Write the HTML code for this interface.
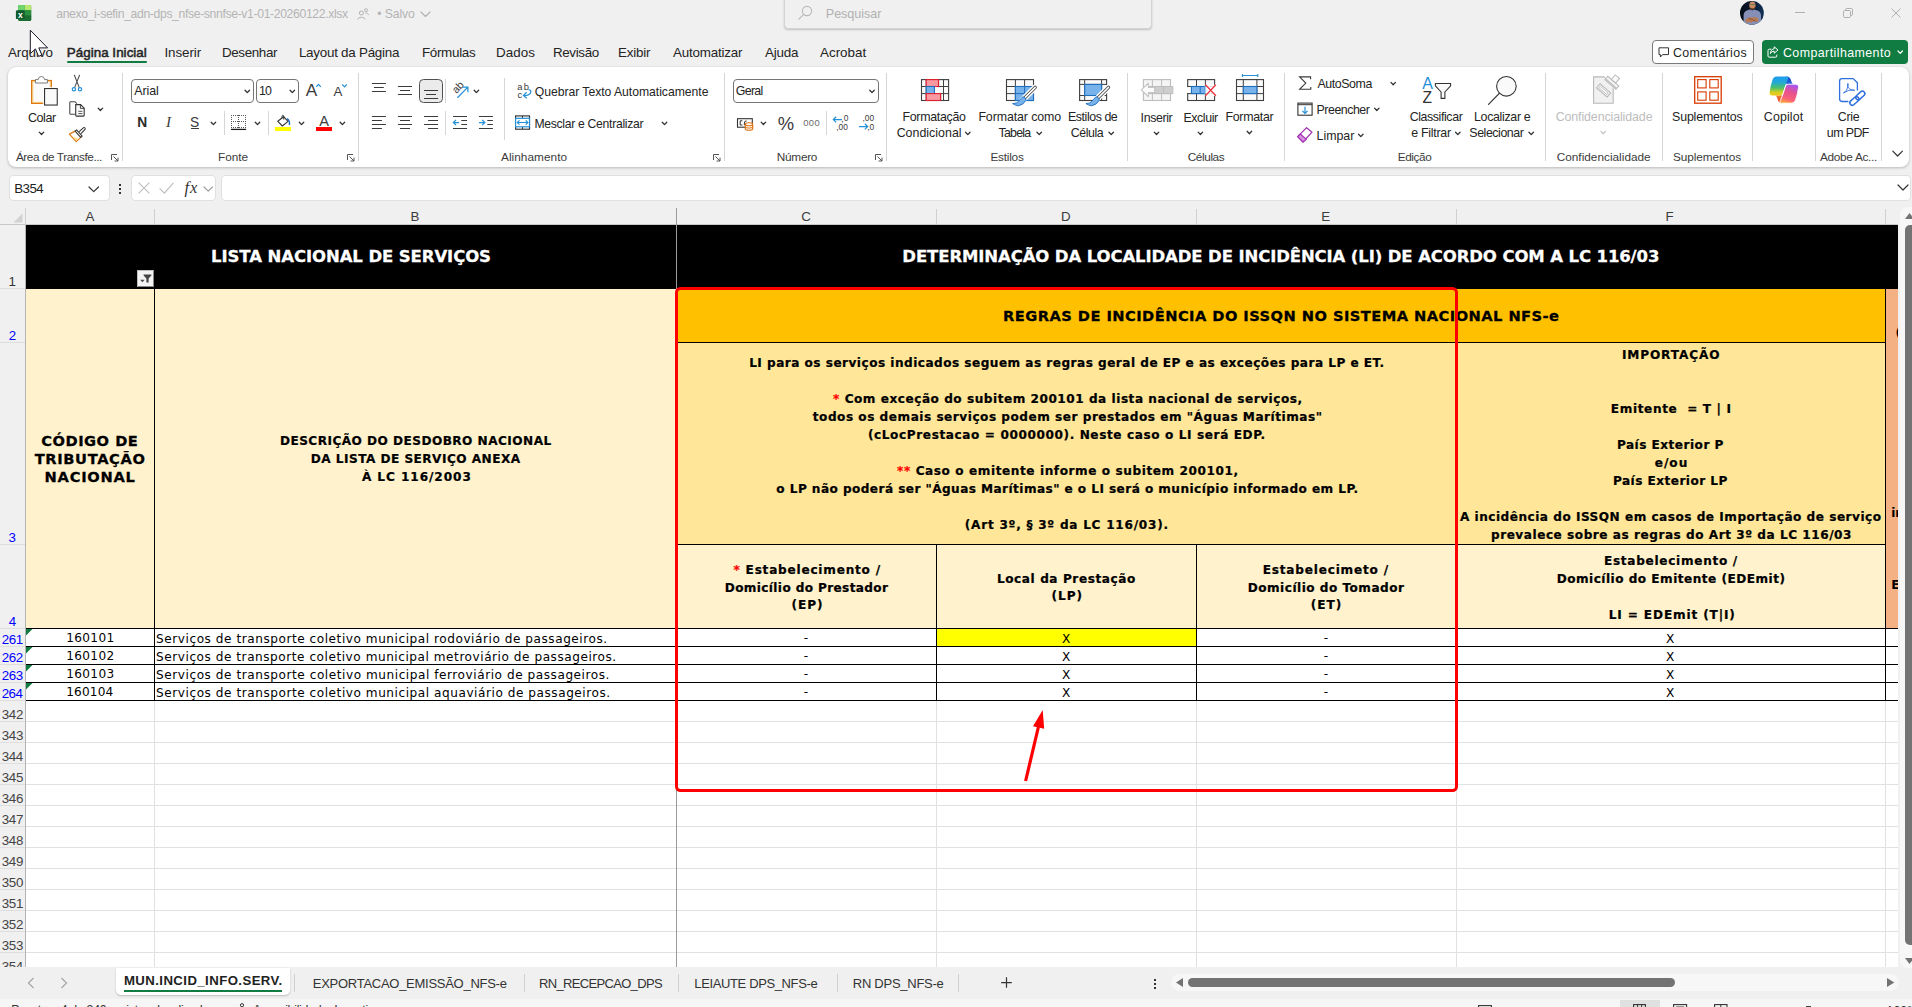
<!DOCTYPE html>
<html lang="pt-BR"><head><meta charset="utf-8"><title>anexo_i-sefin_adn-dps_nfse-snnfse-v1-01-20260122.xlsx - Excel</title>
<style>
html,body{margin:0;padding:0}
body{width:1912px;height:1007px;overflow:hidden;background:#f0f0f0;position:relative;font-family:'Liberation Sans',sans-serif}
.b{position:absolute;box-sizing:border-box}
.t{position:absolute;white-space:pre;margin:0;padding:0}
svg{overflow:visible}
</style></head><body>
<svg class="b" style="left:15px;top:4px;" width="18" height="18" viewBox="0 0 18 18">
<rect x="3.2" y="1" width="13" height="16" rx="1.4" fill="#1f7b38"/>
<path d="M3.2 2.4 Q3.2 1 4.6 1 H9.7 V6.2 H3.2 Z" fill="#6dd56b"/><path d="M9.7 1 H14.8 Q16.2 1 16.2 2.4 V6.2 H9.7 Z" fill="#b7e86e"/>
<rect x="9.7" y="6.2" width="6.5" height="5.4" fill="#2a8f3e"/>
<path d="M3.2 11.6 H16.2 V15.6 Q16.2 17 14.8 17 H4.6 Q3.2 17 3.2 15.6 Z" fill="#1b6e33"/>
<rect x="0.9" y="6.2" width="8.7" height="8.9" rx="1.2" fill="#0f5c2f"/>
</svg>
<span class="t" style="left:18.06px;top:10.52px;font-size:8.6px;line-height:8.6px;color:#fff;font-weight:700;">x</span>
<span class="t" style="left:56.24px;top:8.11px;font-size:12.2px;line-height:12.2px;color:#b4b4b4;letter-spacing:-0.354px;">anexo_i-sefin_adn-dps_nfse-snnfse-v1-01-20260122.xlsx</span>
<svg class="b" style="left:356.5px;top:7.5px;" width="12" height="12" viewBox="0 0 12 12"><circle cx="4.4" cy="5" r="2" fill="none" stroke="#b0b0b0" stroke-width="1"/><path d="M0.8 11.5 C1 8.6 7.8 8.6 8 11.5" fill="none" stroke="#b0b0b0" stroke-width="1"/><circle cx="9" cy="2.2" r="1.5" fill="none" stroke="#b0b0b0" stroke-width="0.9"/><path d="M8.2 5.2 C10 4.6 11.4 5.6 11.5 7" fill="none" stroke="#b0b0b0" stroke-width="0.9"/></svg>
<span class="t" style="left:377.37px;top:8.11px;font-size:12.2px;line-height:12.2px;color:#b4b4b4;letter-spacing:-0.134px;">• Salvo</span>
<svg class="b" style="left:420.5px;top:11.75px;" width="9" height="4.5" viewBox="0 0 9 4.5"><path d="M0 0 L4.5 4.5 L9 0" fill="none" stroke="#b0b0b0" stroke-width="1.1" stroke-linecap="round" stroke-linejoin="round"/></svg>
<div class="b" style="left:784px;top:-6px;width:368px;height:34.5px;background:#f0f0f0;border:1px solid #d4d4d4;border-radius:4px;box-shadow:0 1px 2px rgba(0,0,0,.2);"></div>
<svg class="b" style="left:798px;top:5px;" width="15" height="15" viewBox="0 0 15 15"><circle cx="9" cy="6" r="4.6" fill="none" stroke="#b8b8b8" stroke-width="1.1"/><path d="M5.7 9.3 L0.8 14.2" stroke="#b8b8b8" stroke-width="1.1" stroke-linecap="round"/></svg>
<span class="t" style="left:825.82px;top:8.08px;font-size:12.6px;line-height:12.6px;color:#b0b0b0;letter-spacing:-0.057px;">Pesquisar</span>
<svg class="b" style="left:1740.3px;top:1.1px;" width="23.8" height="23.8" viewBox="0 0 23.8 23.8"><defs><clipPath id="av"><circle cx="11.9" cy="11.9" r="11.9"/></clipPath>
<linearGradient id="avbg" x1="0" y1="0" x2="1" y2="0"><stop offset="0" stop-color="#070d18"/><stop offset="0.55" stop-color="#0a1830"/><stop offset="1" stop-color="#12355a"/></linearGradient></defs>
<g clip-path="url(#av)"><rect width="24" height="24" fill="url(#avbg)"/>
<path d="M3.6 24 V14 Q4 9.6 9 8.8 L12 8.2 L15 8.8 Q20.6 9.8 21 14 V24 Z" fill="#8690b6"/>
<path d="M10.6 8.6 L12.2 10.6 L13.8 8.6 L13 7.6 H11.4 Z" fill="#4a7ab8"/>
<ellipse cx="12.4" cy="4.6" rx="3.1" ry="4" fill="#c98a62"/>
<path d="M9.5 5.8 Q9.8 9 12.4 9.2 Q15 9 15.3 5.8 Q14.2 7.4 12.4 7.4 Q10.6 7.4 9.5 5.8 Z" fill="#4a2e20"/>
<rect x="9.6" y="3" width="5.6" height="0.9" fill="#6a7a58"/>
<path d="M5.4 19 Q8 15.4 12 16.4 Q15.6 15.2 18.4 17.8 L17.8 21 Q14 19.4 11.6 21.4 Q8.4 20.4 5.8 21.6 Z" fill="#b87a52"/>
<path d="M8.4 17.4 Q12 18 16 20.4" stroke="#7a4a30" stroke-width="0.7" fill="none"/>
</g></svg>
<div class="b" style="left:1795px;top:12px;width:10px;height:1px;background:#b0b0b0;"></div>
<svg class="b" style="left:1843px;top:8px;" width="10" height="10" viewBox="0 0 10 10"><rect x="0.5" y="2.5" width="7" height="7" rx="1.2" fill="none" stroke="#b0b0b0"/><path d="M2.5 2.5 V1.7 Q2.5 0.5 3.7 0.5 H8.3 Q9.5 0.5 9.5 1.7 V6.3 Q9.5 7.5 8.3 7.5 H7.5" fill="none" stroke="#b0b0b0"/></svg>
<svg class="b" style="left:1891px;top:8px;" width="10" height="10" viewBox="0 0 10 10"><path d="M0.5 0.5 L9.5 9.5 M9.5 0.5 L0.5 9.5" stroke="#b0b0b0" stroke-width="1" fill="none"/></svg>
<span class="t" style="left:8.04px;top:46.22px;font-size:13.4px;line-height:13.4px;color:#242424;letter-spacing:-0.099px;">Arquivo</span>
<span class="t" style="left:66.70px;top:46.22px;font-size:13.4px;line-height:13.4px;color:#242424;letter-spacing:0.038px;-webkit-text-stroke-width:0.5px;">Página Inicial</span>
<span class="t" style="left:164.46px;top:46.22px;font-size:13.4px;line-height:13.4px;color:#242424;letter-spacing:-0.088px;">Inserir</span>
<span class="t" style="left:221.92px;top:46.22px;font-size:13.4px;line-height:13.4px;color:#242424;letter-spacing:-0.361px;">Desenhar</span>
<span class="t" style="left:298.92px;top:46.22px;font-size:13.4px;line-height:13.4px;color:#242424;letter-spacing:-0.249px;">Layout da Página</span>
<span class="t" style="left:421.92px;top:46.22px;font-size:13.4px;line-height:13.4px;color:#242424;letter-spacing:-0.290px;">Fórmulas</span>
<span class="t" style="left:495.92px;top:46.22px;font-size:13.4px;line-height:13.4px;color:#242424;letter-spacing:0.080px;">Dados</span>
<span class="t" style="left:552.92px;top:46.22px;font-size:13.4px;line-height:13.4px;color:#242424;letter-spacing:-0.338px;">Revisão</span>
<span class="t" style="left:617.92px;top:46.22px;font-size:13.4px;line-height:13.4px;color:#242424;letter-spacing:-0.188px;">Exibir</span>
<span class="t" style="left:673.04px;top:46.22px;font-size:13.4px;line-height:13.4px;color:#242424;letter-spacing:-0.213px;">Automatizar</span>
<span class="t" style="left:764.92px;top:46.22px;font-size:13.4px;line-height:13.4px;color:#242424;letter-spacing:-0.204px;">Ajuda</span>
<span class="t" style="left:820.04px;top:46.22px;font-size:13.4px;line-height:13.4px;color:#242424;">Acrobat</span>
<div class="b" style="left:67px;top:61px;width:80px;height:2.4px;background:#107c41;border-radius:1px;"></div>
<div class="b" style="left:1652.3px;top:40.2px;width:101.6px;height:23.6px;background:#fff;border:1px solid #7a7a7a;border-radius:4px;"></div>
<svg class="b" style="left:1657.5px;top:46.7px;" width="12" height="12" viewBox="0 0 12 12"><path d="M1 0.8 H10.5 V7.6 H4.6 L2.4 10 V7.6 H1 Z" fill="none" stroke="#333" stroke-width="1" stroke-linejoin="round"/></svg>
<span class="t" style="left:1672.98px;top:46.79px;font-size:12.4px;line-height:12.4px;color:#242424;letter-spacing:0.341px;">Comentários</span>
<div class="b" style="left:1762px;top:40.2px;width:146.2px;height:23.6px;background:#107c41;border-radius:4px;"></div>
<svg class="b" style="left:1766.5px;top:45.5px;" width="12" height="12" viewBox="0 0 12 12"><path d="M4.5 3.2 H2.2 Q1 3.2 1 4.4 V10 Q1 11.2 2.2 11.2 H8.6 Q9.8 11.2 9.8 10 V8.6" fill="none" stroke="#fff" stroke-width="1"/><path d="M7.2 0.8 L11 4 L7.2 7.2 V5.2 C5.4 5.2 4.2 6 3.4 7.6 C3.6 4.8 5 3 7.2 2.8 Z" fill="none" stroke="#fff" stroke-width="1" stroke-linejoin="round"/></svg>
<span class="t" style="left:1782.98px;top:46.79px;font-size:12.4px;line-height:12.4px;color:#fff;letter-spacing:0.433px;">Compartilhamento</span>
<svg class="b" style="left:1898.35px;top:51.199999999999996px;" width="4.5" height="2.4" viewBox="0 0 4.5 2.4"><path d="M0 0 L2.25 2.4 L4.5 0" fill="none" stroke="#fff" stroke-width="1.3" stroke-linecap="round" stroke-linejoin="round"/></svg>
<svg class="b" style="left:0px;top:0px;z-index:50;" width="60" height="60" viewBox="0 0 60 60"><path d="M30.3 30.2 V53.6 L35.4 48.9 L38.6 56.4 L41.8 55 L38.8 47.9 H47.6 Z" fill="#fff" stroke="#1a1a2a" stroke-width="1" stroke-linejoin="miter"/></svg>
<div class="b" style="left:8px;top:67px;width:1901px;height:99.7px;background:#fff;border-radius:8px;box-shadow:0 1px 3px rgba(0,0,0,.22),0 0 1px rgba(0,0,0,.15);"></div>
<div class="b" style="left:121.8px;top:72.5px;width:1px;height:88.5px;background:#d6d6d6;"></div>
<div class="b" style="left:358.0px;top:72.5px;width:1px;height:88.5px;background:#d6d6d6;"></div>
<div class="b" style="left:723.5px;top:72.5px;width:1px;height:88.5px;background:#d6d6d6;"></div>
<div class="b" style="left:885.7px;top:72.5px;width:1px;height:88.5px;background:#d6d6d6;"></div>
<div class="b" style="left:1127.0px;top:72.5px;width:1px;height:88.5px;background:#d6d6d6;"></div>
<div class="b" style="left:1283.9px;top:72.5px;width:1px;height:88.5px;background:#d6d6d6;"></div>
<div class="b" style="left:1545.0px;top:72.5px;width:1px;height:88.5px;background:#d6d6d6;"></div>
<div class="b" style="left:1661.9px;top:72.5px;width:1px;height:88.5px;background:#d6d6d6;"></div>
<div class="b" style="left:1752.0px;top:72.5px;width:1px;height:88.5px;background:#d6d6d6;"></div>
<div class="b" style="left:1814.8px;top:72.5px;width:1px;height:88.5px;background:#d6d6d6;"></div>
<div class="b" style="left:1880.8px;top:72.5px;width:1px;height:88.5px;background:#d6d6d6;"></div>
<span class="t" style="left:15.95px;top:152.32px;font-size:11.8px;line-height:11.8px;color:#3b3b3b;letter-spacing:-0.433px;">Área de Transfe...</span>
<svg class="b" style="left:111px;top:153.5px;" width="8" height="8" viewBox="0 0 8 8"><path d="M0.5 6 V0.5 H6" fill="none" stroke="#555" stroke-width="1"/><path d="M2.5 2.5 L7 7 M7 3.6 V7 H3.6" fill="none" stroke="#555" stroke-width="1"/></svg>
<span class="t" style="left:218.03px;top:152.32px;font-size:11.8px;line-height:11.8px;color:#3b3b3b;letter-spacing:-0.013px;">Fonte</span>
<svg class="b" style="left:347px;top:153.5px;" width="8" height="8" viewBox="0 0 8 8"><path d="M0.5 6 V0.5 H6" fill="none" stroke="#555" stroke-width="1"/><path d="M2.5 2.5 L7 7 M7 3.6 V7 H3.6" fill="none" stroke="#555" stroke-width="1"/></svg>
<span class="t" style="left:501.03px;top:152.32px;font-size:11.8px;line-height:11.8px;color:#3b3b3b;letter-spacing:0.045px;">Alinhamento</span>
<svg class="b" style="left:712.7px;top:153.5px;" width="8" height="8" viewBox="0 0 8 8"><path d="M0.5 6 V0.5 H6" fill="none" stroke="#555" stroke-width="1"/><path d="M2.5 2.5 L7 7 M7 3.6 V7 H3.6" fill="none" stroke="#555" stroke-width="1"/></svg>
<span class="t" style="left:776.74px;top:152.32px;font-size:11.8px;line-height:11.8px;color:#3b3b3b;letter-spacing:-0.252px;">Número</span>
<svg class="b" style="left:875px;top:153.5px;" width="8" height="8" viewBox="0 0 8 8"><path d="M0.5 6 V0.5 H6" fill="none" stroke="#555" stroke-width="1"/><path d="M2.5 2.5 L7 7 M7 3.6 V7 H3.6" fill="none" stroke="#555" stroke-width="1"/></svg>
<span class="t" style="left:990.48px;top:152.32px;font-size:11.8px;line-height:11.8px;color:#3b3b3b;letter-spacing:-0.231px;">Estilos</span>
<span class="t" style="left:1187.67px;top:152.32px;font-size:11.8px;line-height:11.8px;color:#3b3b3b;letter-spacing:-0.383px;">Células</span>
<span class="t" style="left:1397.74px;top:152.32px;font-size:11.8px;line-height:11.8px;color:#3b3b3b;letter-spacing:-0.417px;">Edição</span>
<span class="t" style="left:1556.67px;top:152.32px;font-size:11.8px;line-height:11.8px;color:#3b3b3b;letter-spacing:0.015px;">Confidencialidade</span>
<span class="t" style="left:1673.06px;top:152.32px;font-size:11.8px;line-height:11.8px;color:#3b3b3b;letter-spacing:-0.088px;">Suplementos</span>
<span class="t" style="left:1820.03px;top:152.32px;font-size:11.8px;line-height:11.8px;color:#3b3b3b;letter-spacing:-0.307px;">Adobe Ac...</span>
<span class="t" style="left:27.90px;top:112.28px;font-size:12.6px;line-height:12.6px;color:#242424;letter-spacing:-0.462px;">Colar</span>
<div class="b" style="left:131px;top:79px;width:122.5px;height:23.8px;background:#fff;border:1px solid #757575;border-radius:4px;"></div>
<span class="t" style="left:134.15px;top:85.19px;font-size:12.4px;line-height:12.4px;color:#242424;letter-spacing:-0.026px;">Arial</span>
<div class="b" style="left:256.2px;top:79px;width:42.6px;height:23.8px;background:#fff;border:1px solid #757575;border-radius:4px;"></div>
<span class="t" style="left:259.11px;top:85.19px;font-size:12.4px;line-height:12.4px;color:#242424;letter-spacing:-1.000px;">10</span>
<span class="t" style="left:305.75px;top:81.87px;font-size:17.2px;line-height:17.2px;color:#3b3b3b;letter-spacing:0.563px;">A</span>
<span class="t" style="left:333.47px;top:85.02px;font-size:13.3px;line-height:13.3px;color:#3b3b3b;letter-spacing:0.723px;">A</span>
<span class="t" style="left:137.36px;top:116.07px;font-size:13.8px;line-height:13.8px;color:#2b2b2b;font-weight:700;letter-spacing:0.159px;">N</span>
<span class="t" style="left:166.11px;top:115.05px;font-size:15px;line-height:15px;color:#3b3b3b;font-family:'Liberation Serif',serif;font-style:italic;letter-spacing:1.000px;">I</span>
<span class="t" style="left:189.89px;top:116.19px;font-size:13.8px;line-height:13.8px;color:#3b3b3b;letter-spacing:-1.000px;">S</span>
<div class="b" style="left:191px;top:128px;width:7.8px;height:1px;background:#3b3b3b;"></div>
<div class="b" style="left:224px;top:111.3px;width:1px;height:23.39999999999999px;background:#d6d6d6;"></div>
<div class="b" style="left:268px;top:111.3px;width:1px;height:23.39999999999999px;background:#d6d6d6;"></div>
<div class="b" style="left:275px;top:126.9px;width:16.1px;height:4.1px;background:#ffff00;"></div>
<span class="t" style="left:319.19px;top:113.96px;font-size:14.6px;line-height:14.6px;color:#3b3b3b;letter-spacing:0.442px;">A</span>
<div class="b" style="left:315.9px;top:126.9px;width:16.1px;height:4.1px;background:#ff0000;"></div>
<div class="b" style="left:419px;top:79px;width:24px;height:24px;background:#ebebeb;border:1px solid #505050;border-radius:4.5px;"></div>
<div class="b" style="left:445px;top:79.1px;width:1px;height:23.900000000000006px;background:#d6d6d6;"></div>
<div class="b" style="left:504px;top:78px;width:1px;height:62px;background:#d6d6d6;"></div>
<span class="t" style="left:534.70px;top:86.01px;font-size:12.2px;line-height:12.2px;color:#242424;letter-spacing:-0.029px;">Quebrar Texto Automaticamente</span>
<div class="b" style="left:445px;top:111.3px;width:1px;height:23.39999999999999px;background:#d6d6d6;"></div>
<span class="t" style="left:534.43px;top:117.91px;font-size:12.2px;line-height:12.2px;color:#242424;letter-spacing:-0.301px;">Mesclar e Centralizar</span>
<div class="b" style="left:733px;top:79px;width:146px;height:23.8px;background:#fff;border:1px solid #757575;border-radius:4px;"></div>
<span class="t" style="left:735.65px;top:85.19px;font-size:12.4px;line-height:12.4px;color:#242424;letter-spacing:-0.641px;">Geral</span>
<span class="t" style="left:777.79px;top:114.80px;font-size:18.4px;line-height:18.4px;color:#3b3b3b;letter-spacing:-0.455px;">%</span>
<span class="t" style="left:803.18px;top:118.03px;font-size:9.4px;line-height:9.4px;color:#6a6a6a;letter-spacing:0.392px;">000</span>
<div class="b" style="left:826px;top:111.1px;width:1px;height:23.599999999999994px;background:#d6d6d6;"></div>
<span class="t" style="left:902.44px;top:111.19px;font-size:12.4px;line-height:12.4px;color:#242424;letter-spacing:-0.283px;">Formatação</span>
<span class="t" style="left:896.65px;top:127.19px;font-size:12.4px;line-height:12.4px;color:#242424;letter-spacing:0.021px;">Condicional</span>
<span class="t" style="left:978.40px;top:111.19px;font-size:12.4px;line-height:12.4px;color:#242424;letter-spacing:-0.103px;">Formatar como</span>
<span class="t" style="left:998.50px;top:127.19px;font-size:12.4px;line-height:12.4px;color:#242424;letter-spacing:-0.772px;">Tabela</span>
<span class="t" style="left:1068.01px;top:111.19px;font-size:12.4px;line-height:12.4px;color:#242424;letter-spacing:-0.445px;">Estilos de</span>
<span class="t" style="left:1070.65px;top:127.19px;font-size:12.4px;line-height:12.4px;color:#242424;letter-spacing:-0.420px;">Célula</span>
<span class="t" style="left:1140.59px;top:111.99px;font-size:12.4px;line-height:12.4px;color:#242424;letter-spacing:-0.376px;">Inserir</span>
<span class="t" style="left:1183.40px;top:111.99px;font-size:12.4px;line-height:12.4px;color:#242424;letter-spacing:-0.398px;">Excluir</span>
<span class="t" style="left:1225.40px;top:110.89px;font-size:12.4px;line-height:12.4px;color:#242424;letter-spacing:-0.276px;">Formatar</span>
<span class="t" style="left:1317.38px;top:77.99px;font-size:12.4px;line-height:12.4px;color:#242424;letter-spacing:-0.419px;">AutoSoma</span>
<span class="t" style="left:1316.59px;top:103.89px;font-size:12.4px;line-height:12.4px;color:#242424;letter-spacing:-0.489px;">Preencher</span>
<span class="t" style="left:1316.59px;top:129.89px;font-size:12.4px;line-height:12.4px;color:#242424;letter-spacing:-0.018px;">Limpar</span>
<span class="t" style="left:1409.65px;top:111.19px;font-size:12.4px;line-height:12.4px;color:#242424;letter-spacing:-0.400px;">Classificar</span>
<span class="t" style="left:1411.34px;top:127.19px;font-size:12.4px;line-height:12.4px;color:#242424;letter-spacing:-0.288px;">e Filtrar</span>
<span class="t" style="left:1474.01px;top:111.19px;font-size:12.4px;line-height:12.4px;color:#242424;letter-spacing:-0.322px;">Localizar e</span>
<span class="t" style="left:1469.32px;top:127.19px;font-size:12.4px;line-height:12.4px;color:#242424;letter-spacing:-0.447px;">Selecionar</span>
<span class="t" style="left:1555.65px;top:111.19px;font-size:12.4px;line-height:12.4px;color:#bdbdbd;letter-spacing:-0.101px;">Confidencialidade</span>
<span class="t" style="left:1672.08px;top:111.19px;font-size:12.4px;line-height:12.4px;color:#242424;letter-spacing:-0.176px;">Suplementos</span>
<span class="t" style="left:1763.85px;top:111.19px;font-size:12.4px;line-height:12.4px;color:#242424;letter-spacing:0.123px;">Copilot</span>
<span class="t" style="left:1837.85px;top:111.19px;font-size:12.4px;line-height:12.4px;color:#242424;letter-spacing:-0.325px;">Crie</span>
<span class="t" style="left:1826.83px;top:126.89px;font-size:12.4px;line-height:12.4px;color:#242424;letter-spacing:-0.585px;">um PDF</span>
<svg class="b" style="left:0;top:0" width="1912" height="200" viewBox="0 0 1912 200"><path d="M1892.80 151.20 L1897.60 156.00 L1902.40 151.20" fill="none" stroke="#333" stroke-width="1.2" stroke-linecap="round" stroke-linejoin="round"/><rect x="31.65" y="80.55" width="19.7" height="22.8" fill="#fde6b4" stroke="#e07a10" stroke-width="1.3"/><rect x="33.6" y="82.4" width="15.9" height="19.2" fill="#fafafa"/><path d="M35.4 83 V79.6 H38.2 Q38.6 76.5 41.4 76.5 Q44.2 76.5 44.6 79.6 H47.4 V83 Z" fill="#fff" stroke="#7a7a7a" stroke-width="1"/><rect x="43.2" y="87.2" width="15.4" height="19" fill="#fff"/><rect x="44.55" y="88.55" width="12.7" height="16.5" fill="#fafafa" stroke="#333" stroke-width="1.1"/><path d="M39.25 132.10 L41.50 134.50 L43.75 132.10" fill="none" stroke="#333" stroke-width="1.3" stroke-linecap="round" stroke-linejoin="round"/><path d="M74.4 75.2 L79.3 87.6 M79.5 75.2 L74.6 87.6" stroke="#4a4a4a" stroke-width="1.05" fill="none" stroke-linecap="round"/><circle cx="73.9" cy="89.2" r="1.65" fill="#fff" stroke="#2490d8" stroke-width="1.2"/><circle cx="80" cy="89.2" r="1.65" fill="#fff" stroke="#2490d8" stroke-width="1.2"/><path d="M74.9 114.2 H70.6 Q69.8 114.2 69.8 113.4 V102.5 Q69.8 101.7 70.6 101.7 H74.9 L77 103.6" fill="none" stroke="#444" stroke-width="1.05"/><path d="M75.7 104.6 H80.6 L84.2 108.2 V115.3 Q84.2 116.1 83.4 116.1 H76.5 Q75.7 116.1 75.7 115.3 Z" fill="#fafafa" stroke="#333" stroke-width="1.1"/><path d="M80.4 104.8 V108.4 H84" fill="none" stroke="#333" stroke-width="0.9"/><path d="M78.3 111.3 H82.4 M78.3 113.6 H82.4" stroke="#444" stroke-width="0.9"/><path d="M98.15 108.10 L100.40 110.50 L102.65 108.10" fill="none" stroke="#333" stroke-width="1.3" stroke-linecap="round" stroke-linejoin="round"/><path d="M69.4 134.1 L75.6 130.9 L81.1 137.1 L76.2 141.6 Z" fill="#fff" stroke="#e07a10" stroke-width="1.2" stroke-linejoin="round"/><path d="M72.2 136.4 L78 138.2 L76.2 140.4 Z" fill="#fde08a"/><path d="M79.2 131.6 L83.3 127.9 Q84.3 127.2 85 128 Q85.6 128.9 84.8 129.7 L81 133.6" fill="#fff" stroke="#333" stroke-width="1.05"/><path d="M76.6 129.9 L82.2 136.1 L80.7 137.4 L75.1 131.2 Z" fill="#fff" stroke="#333" stroke-width="1.05" stroke-linejoin="round"/><path d="M245.05 90.20 L247.30 92.60 L249.55 90.20" fill="none" stroke="#333" stroke-width="1.3" stroke-linecap="round" stroke-linejoin="round"/><path d="M290.05 90.20 L292.30 92.60 L294.55 90.20" fill="none" stroke="#333" stroke-width="1.3" stroke-linecap="round" stroke-linejoin="round"/><path d="M316.2 86.9 L318.5 84.4 L320.8 86.9" fill="none" stroke="#2490d8" stroke-width="1.25"/><path d="M342.2 84.4 L344.5 86.9 L346.8 84.4" fill="none" stroke="#2490d8" stroke-width="1.25"/><path d="M211.15 122.20 L213.40 124.60 L215.65 122.20" fill="none" stroke="#333" stroke-width="1.3" stroke-linecap="round" stroke-linejoin="round"/><g stroke="#555" stroke-width="1" stroke-dasharray="1 1" fill="none"><path d="M231 115.5 H246 M231 121.5 H246 M231 127.5 H246 M231.5 115 V128 M238.5 115 V128 M245.5 115 V128"/></g><path d="M231 129.4 H246.1" stroke="#1a1a1a" stroke-width="1.3"/><path d="M255.25 122.20 L257.50 124.60 L259.75 122.20" fill="none" stroke="#333" stroke-width="1.3" stroke-linecap="round" stroke-linejoin="round"/><path d="M283.6 116.7 L288 121.3 L282.4 126 L277.8 121.3 Z" fill="#fff" stroke="#333" stroke-width="1.1" stroke-linejoin="round"/><path d="M283.8 119.6 V116.6 Q283.8 115.4 282.9 115.4 Q282 115.4 282 116.6 V118.3" fill="none" stroke="#333" stroke-width="1"/><path d="M286.9 118.6 Q290.3 120.6 289.3 125" fill="none" stroke="#1e6fc0" stroke-width="1.5"/><path d="M299.25 122.20 L301.50 124.60 L303.75 122.20" fill="none" stroke="#333" stroke-width="1.3" stroke-linecap="round" stroke-linejoin="round"/><path d="M340.15 122.20 L342.40 124.60 L344.65 122.20" fill="none" stroke="#333" stroke-width="1.3" stroke-linecap="round" stroke-linejoin="round"/><path d="M371.9 83.5 H386" stroke="#3b3b3b" stroke-width="1.05"/><path d="M373.9 87.5 H383.8" stroke="#3b3b3b" stroke-width="1.05"/><path d="M371.9 91.5 H386" stroke="#3b3b3b" stroke-width="1.05"/><path d="M397.9 86.5 H412" stroke="#3b3b3b" stroke-width="1.05"/><path d="M400 90.5 H410" stroke="#3b3b3b" stroke-width="1.05"/><path d="M397.9 94.5 H412" stroke="#3b3b3b" stroke-width="1.05"/><path d="M424 90.5 H438.1" stroke="#3b3b3b" stroke-width="1.05"/><path d="M426 94.5 H436" stroke="#3b3b3b" stroke-width="1.05"/><path d="M424 98.5 H438.1" stroke="#3b3b3b" stroke-width="1.05"/><text x="0" y="0" font-family="Liberation Sans, sans-serif" font-size="10.6" fill="#3b3b3b" transform="translate(456.4 94) rotate(-47)">ab</text><path d="M457.4 97.7 L467.6 87.4 M462.8 87.1 H467.9 V92.2" fill="none" stroke="#2490d8" stroke-width="1.25"/><path d="M474.15 90.20 L476.40 92.60 L478.65 90.20" fill="none" stroke="#333" stroke-width="1.3" stroke-linecap="round" stroke-linejoin="round"/><text x="517.2" y="90.1" font-family="Liberation Sans, sans-serif" font-size="9.4" fill="#3b3b3b" textLength="11.8">ab</text><text x="517.4" y="97.5" font-family="Liberation Sans, sans-serif" font-size="9.4" fill="#3b3b3b">c</text><path d="M528.6 89.6 Q531.6 90 530.6 92.8 Q529.6 95.6 524 95.5 M526.6 92.2 L523.5 95.4 L526.8 98.4" fill="none" stroke="#2490d8" stroke-width="1.25"/><path d="M371.9 116.5 H386" stroke="#3b3b3b" stroke-width="1.05"/><path d="M371.9 120.5 H381.9" stroke="#3b3b3b" stroke-width="1.05"/><path d="M371.9 124.5 H386" stroke="#3b3b3b" stroke-width="1.05"/><path d="M371.9 128.5 H381.9" stroke="#3b3b3b" stroke-width="1.05"/><path d="M397.9 116.5 H412" stroke="#3b3b3b" stroke-width="1.05"/><path d="M400 120.5 H410" stroke="#3b3b3b" stroke-width="1.05"/><path d="M397.9 124.5 H412" stroke="#3b3b3b" stroke-width="1.05"/><path d="M400 128.5 H410" stroke="#3b3b3b" stroke-width="1.05"/><path d="M424 116.5 H438.1" stroke="#3b3b3b" stroke-width="1.05"/><path d="M428.1 120.5 H438.1" stroke="#3b3b3b" stroke-width="1.05"/><path d="M424 124.5 H438.1" stroke="#3b3b3b" stroke-width="1.05"/><path d="M428.1 128.5 H438.1" stroke="#3b3b3b" stroke-width="1.05"/><path d="M453 116.5 H467" stroke="#3b3b3b" stroke-width="1.05"/><path d="M461.3 120.5 H467" stroke="#3b3b3b" stroke-width="1.05"/><path d="M461.3 124.5 H467" stroke="#3b3b3b" stroke-width="1.05"/><path d="M453 128.5 H467" stroke="#3b3b3b" stroke-width="1.05"/><path d="M459 122.5 H453.6 M456 119.9 L453.4 122.5 L456 125.1" fill="none" stroke="#2490d8" stroke-width="1.25"/><path d="M478.9 116.5 H492.9" stroke="#3b3b3b" stroke-width="1.05"/><path d="M487.3 120.5 H492.9" stroke="#3b3b3b" stroke-width="1.05"/><path d="M487.3 124.5 H492.9" stroke="#3b3b3b" stroke-width="1.05"/><path d="M478.9 128.5 H492.9" stroke="#3b3b3b" stroke-width="1.05"/><path d="M479 122.5 H484.6 M482.2 119.9 L484.8 122.5 L482.2 125.1" fill="none" stroke="#2490d8" stroke-width="1.25"/><rect x="515.6" y="115.9" width="13.9" height="13.3" fill="#fff" stroke="#333" stroke-width="1.15"/><path d="M522.5 116 V129.2" stroke="#333" stroke-width="1.05"/><rect x="515.6" y="118.3" width="13.9" height="8.5" fill="#fff" stroke="#2490d8" stroke-width="1.2"/><path d="M517.4 122.5 H527.8 M519.5 120.3 L517.3 122.5 L519.5 124.7 M525.7 120.3 L527.9 122.5 L525.7 124.7" fill="none" stroke="#2490d8" stroke-width="1.2"/><path d="M662.25 122.20 L664.50 124.60 L666.75 122.20" fill="none" stroke="#333" stroke-width="1.3" stroke-linecap="round" stroke-linejoin="round"/><path d="M869.75 90.20 L872.00 92.60 L874.25 90.20" fill="none" stroke="#333" stroke-width="1.3" stroke-linecap="round" stroke-linejoin="round"/><rect x="737.5" y="118.7" width="14.8" height="8.5" fill="#fff" stroke="#333" stroke-width="1.1"/><path d="M742.4 120.8 H740.2 V125 H742.4 M746.6 121 Q744.4 120.6 744.4 123 V125.2" fill="none" stroke="#333" stroke-width="1"/><path d="M745.3 124.4 V128.8 Q745.3 130.3 749 130.3 Q752.7 130.3 752.7 128.8 V124.4" fill="#fff" stroke="#e0700a" stroke-width="1.1"/><ellipse cx="749" cy="124.2" rx="3.7" ry="1.5" fill="#fff" stroke="#e0700a" stroke-width="1.1"/><path d="M745.3 126.6 Q745.3 128.1 749 128.1 Q752.7 128.1 752.7 126.6" fill="none" stroke="#e0700a" stroke-width="1"/><path d="M761.15 122.10 L763.40 124.50 L765.65 122.10" fill="none" stroke="#333" stroke-width="1.3" stroke-linecap="round" stroke-linejoin="round"/><text x="843.7" y="121.4" font-family="Liberation Sans, sans-serif" font-size="8.4" fill="#3b3b3b">0</text><text x="836.2" y="130" font-family="Liberation Sans, sans-serif" font-size="8.4" fill="#3b3b3b" textLength="11.8">,00</text><text x="841.2" y="121.6" font-family="Liberation Sans, sans-serif" font-size="8.4" fill="#3b3b3b">,</text><path d="M842 119.6 H833.4 M836.2 116.8 L833.3 119.6 L836.2 122.4" fill="none" stroke="#2490d8" stroke-width="1.2"/><text x="862.4" y="121.4" font-family="Liberation Sans, sans-serif" font-size="8.4" fill="#3b3b3b" textLength="11.8">,00</text><text x="867.2" y="130" font-family="Liberation Sans, sans-serif" font-size="8.4" fill="#3b3b3b" textLength="7">,0</text><path d="M859 126.6 H867.6 M864.8 123.8 L867.7 126.6 L864.8 129.4" fill="none" stroke="#2490d8" stroke-width="1.2"/><rect x="921.5" y="79.6" width="27.10" height="20.90" fill="#fafafa" stroke="#3f3f3f" stroke-width="1.1"/><path d="M926.2 79.6 V100.5" stroke="#3f3f3f" stroke-width="1"/><path d="M943.5 79.6 V100.5" stroke="#3f3f3f" stroke-width="1"/><path d="M921.5 86.5 H948.6" stroke="#3f3f3f" stroke-width="1"/><path d="M921.5 93.6 H948.6" stroke="#3f3f3f" stroke-width="1"/><path d="M938.6 79.6 V86.5 M940.6 93.6 V100.5" stroke="#3f3f3f" stroke-width="1"/><rect x="926.2" y="79.6" width="12.3" height="6.9" fill="#f99aa3" stroke="#e0202c" stroke-width="1.1"/><rect x="926.2" y="86.5" width="8.2" height="7.1" fill="#78b2ea" stroke="#1e6fc0" stroke-width="1.1"/><rect x="926.2" y="93.6" width="14.4" height="6.9" fill="#f99aa3" stroke="#e0202c" stroke-width="1.1"/><path d="M965.55 132.20 L967.80 134.60 L970.05 132.20" fill="none" stroke="#333" stroke-width="1.3" stroke-linecap="round" stroke-linejoin="round"/><rect x="1006.5" y="79.6" width="27.00" height="20.90" fill="#fafafa" stroke="#3f3f3f" stroke-width="1.1"/><path d="M1015.4 79.6 V100.5" stroke="#3f3f3f" stroke-width="1"/><path d="M1024.6 79.6 V100.5" stroke="#3f3f3f" stroke-width="1"/><path d="M1006.5 86.5 H1033.5" stroke="#3f3f3f" stroke-width="1"/><path d="M1006.5 93.6 H1033.5" stroke="#3f3f3f" stroke-width="1"/><rect x="1015.4" y="86.5" width="18.1" height="14" fill="#78b2ea" stroke="#1e6fc0" stroke-width="1.1"/><path d="M1024.6 86.5 V100.5 M1015.4 93.6 H1033.5" stroke="#1e6fc0" stroke-width="1"/><path d="M1035.2 87.4 L1022.2 100.4" stroke="#fff" stroke-width="6" stroke-linecap="round"/><path d="M1035.2 87.4 L1024.2 98.4" stroke="#4a4a4a" stroke-width="3.4" stroke-linecap="round"/><path d="M1035.2 87.4 L1024.2 98.4" stroke="#fff" stroke-width="1.5" stroke-linecap="round"/><path d="M1022.9000000000001 96.80000000000001 Q1026.4 97.80000000000001 1026.0 100.2 Q1023.7 104.9 1018.2 105.8 Q1015.7 105.60000000000001 1012.6 103.60000000000001 Q1017.6 103.60000000000001 1018.8000000000001 101.0 Q1020.2 98.8 1022.9000000000001 96.80000000000001 Z" fill="#78b2ea" stroke="#1e6fc0" stroke-width="0.9"/><path d="M1036.95 132.20 L1039.20 134.60 L1041.45 132.20" fill="none" stroke="#333" stroke-width="1.3" stroke-linecap="round" stroke-linejoin="round"/><rect x="1079.6" y="79.6" width="27.00" height="20.90" fill="#fafafa" stroke="#3f3f3f" stroke-width="1.1"/><path d="M1084.7 79.6 V100.5" stroke="#3f3f3f" stroke-width="1"/><path d="M1101.6 79.6 V100.5" stroke="#3f3f3f" stroke-width="1"/><path d="M1079.6 84.4 H1106.6" stroke="#3f3f3f" stroke-width="1"/><path d="M1079.6 95.5 H1106.6" stroke="#3f3f3f" stroke-width="1"/><rect x="1084.7" y="84.4" width="16.9" height="11.1" fill="#78b2ea" stroke="#1e6fc0" stroke-width="1.1"/><path d="M1108.5 87.4 L1095.5 100.4" stroke="#fff" stroke-width="6" stroke-linecap="round"/><path d="M1108.5 87.4 L1097.5 98.4" stroke="#4a4a4a" stroke-width="3.4" stroke-linecap="round"/><path d="M1108.5 87.4 L1097.5 98.4" stroke="#fff" stroke-width="1.5" stroke-linecap="round"/><path d="M1096.2 96.80000000000001 Q1099.7 97.80000000000001 1099.3 100.2 Q1097.0 104.9 1091.5 105.8 Q1089.0 105.60000000000001 1085.9 103.60000000000001 Q1090.9 103.60000000000001 1092.1 101.0 Q1093.5 98.8 1096.2 96.80000000000001 Z" fill="#78b2ea" stroke="#1e6fc0" stroke-width="0.9"/><path d="M1108.95 132.20 L1111.20 134.60 L1113.45 132.20" fill="none" stroke="#333" stroke-width="1.3" stroke-linecap="round" stroke-linejoin="round"/><rect x="1143.4" y="79.6" width="27.10" height="20.90" fill="#f4f4f4" stroke="#bdbdbd" stroke-width="1.1"/><path d="M1152.4 79.6 V100.5" stroke="#bdbdbd" stroke-width="1"/><path d="M1161.6 79.6 V100.5" stroke="#bdbdbd" stroke-width="1"/><path d="M1143.4 86.5 H1170.5" stroke="#bdbdbd" stroke-width="1"/><path d="M1143.4 93.6 H1170.5" stroke="#bdbdbd" stroke-width="1"/><rect x="1154.7" y="86.5" width="18.1" height="7.1" fill="#cdcdcd" stroke="#bdbdbd" stroke-width="1"/><path d="M1163.7 86.5 V93.6" stroke="#bdbdbd" stroke-width="1"/><path d="M1154.7 87.4 H1148.4 V83.2 L1141.3 89.9 L1148.4 96.6 V92.6 H1154.7 Z" fill="#fbfbfb" stroke="#c4c4c4" stroke-width="1.1" stroke-linejoin="round"/><path d="M1154.25 132.10 L1156.50 134.50 L1158.75 132.10" fill="none" stroke="#333" stroke-width="1.3" stroke-linecap="round" stroke-linejoin="round"/><rect x="1187.7" y="79.6" width="26.90" height="20.90" fill="#fafafa" stroke="#3f3f3f" stroke-width="1.1"/><path d="M1196.5 79.6 V100.5" stroke="#3f3f3f" stroke-width="1"/><path d="M1205.4 79.6 V100.5" stroke="#3f3f3f" stroke-width="1"/><path d="M1187.7 86.5 H1214.6" stroke="#3f3f3f" stroke-width="1"/><path d="M1187.7 93.6 H1214.6" stroke="#3f3f3f" stroke-width="1"/><rect x="1186" y="87.1" width="32" height="5.9" fill="#fff"/><rect x="1191.4" y="86.5" width="13.2" height="7.1" fill="#78b2ea" stroke="#1e6fc0" stroke-width="1.1"/><path d="M1200.2 86.5 V93.6" stroke="#1e6fc0" stroke-width="1"/><path d="M1204.6 86.3 L1208 90 L1204.6 93.8 Z" fill="#78b2ea" stroke="#78b2ea" stroke-width="0.6"/><rect x="1205.6" y="84.6" width="10.6" height="11.4" fill="#fff" opacity="0.85"/><path d="M1205.4 84.8 L1215.9 95.8 M1215.9 84.8 L1205.4 95.8" stroke="#f0303c" stroke-width="1.25"/><path d="M1198.15 132.10 L1200.40 134.50 L1202.65 132.10" fill="none" stroke="#333" stroke-width="1.3" stroke-linecap="round" stroke-linejoin="round"/><rect x="1236.5" y="79.6" width="27.00" height="20.90" fill="#fafafa" stroke="#3f3f3f" stroke-width="1.1"/><path d="M1243.3 79.6 V100.5" stroke="#3f3f3f" stroke-width="1"/><path d="M1256.9 79.6 V100.5" stroke="#3f3f3f" stroke-width="1"/><path d="M1236.5 86.5 H1263.5" stroke="#3f3f3f" stroke-width="1"/><path d="M1236.5 93.6 H1263.5" stroke="#3f3f3f" stroke-width="1"/><rect x="1243.3" y="86.5" width="13.6" height="7.1" fill="#78b2ea" stroke="#1e6fc0" stroke-width="1.1"/><path d="M1242.4 75.5 H1257.8 M1242.4 73.9 V77.1 M1257.8 73.9 V77.1" stroke="#2490d8" stroke-width="1.1"/><path d="M1247.15 131.30 L1249.40 133.70 L1251.65 131.30" fill="none" stroke="#333" stroke-width="1.3" stroke-linecap="round" stroke-linejoin="round"/><path d="M1310.6 79.2 V76.9 H1299.6 L1305.8 83.1 L1299.6 89.3 H1310.8 V87" fill="none" stroke="#3b3b3b" stroke-width="1.1" stroke-linejoin="miter"/><path d="M1390.95 82.40 L1393.20 84.80 L1395.45 82.40" fill="none" stroke="#333" stroke-width="1.3" stroke-linecap="round" stroke-linejoin="round"/><rect x="1297.9" y="103.1" width="14.2" height="12.1" fill="#fff" stroke="#333" stroke-width="1.1"/><path d="M1297.9 104.7 H1312.1" stroke="#333" stroke-width="1"/><path d="M1305 106.8 V113.2 M1302.4 110.8 L1305 113.4 L1307.6 110.8" fill="none" stroke="#2490d8" stroke-width="1.2"/><path d="M1374.55 108.10 L1376.80 110.50 L1379.05 108.10" fill="none" stroke="#333" stroke-width="1.3" stroke-linecap="round" stroke-linejoin="round"/><path d="M1306.6 127.7 L1312 132.2 L1303 142 L1297.7 136.7 Z" fill="#fff" stroke="#a030b0" stroke-width="1.2" stroke-linejoin="round"/><path d="M1300.3 134 L1306.4 139.4 L1303 142 L1297.7 136.7 Z" fill="#d890e0" stroke="#a030b0" stroke-width="1.1" stroke-linejoin="round"/><path d="M1358.55 134.20 L1360.80 136.60 L1363.05 134.20" fill="none" stroke="#333" stroke-width="1.3" stroke-linecap="round" stroke-linejoin="round"/><text x="1422.2" y="88.6" font-family="Liberation Sans, sans-serif" font-size="16" fill="#2490d8" textLength="11">A</text><text x="1422.6" y="102.6" font-family="Liberation Sans, sans-serif" font-size="15.6" fill="#333" textLength="9.6">Z</text><path d="M1435.4 83.5 H1450.6 V85.8 L1444.9 92 V98.4 H1441.1 V92 L1435.4 85.8 Z" fill="#fafafa" stroke="#333" stroke-width="1.1" stroke-linejoin="round"/><path d="M1455.55 132.20 L1457.80 134.60 L1460.05 132.20" fill="none" stroke="#333" stroke-width="1.3" stroke-linecap="round" stroke-linejoin="round"/><circle cx="1506.4" cy="86.3" r="9.8" fill="#fafafa" stroke="#333" stroke-width="1.1"/><path d="M1499.3 93.3 L1488.5 104.3" stroke="#333" stroke-width="1.2" stroke-linecap="round"/><path d="M1528.95 132.20 L1531.20 134.60 L1533.45 132.20" fill="none" stroke="#333" stroke-width="1.3" stroke-linecap="round" stroke-linejoin="round"/><path d="M1593.6 76.9 H1604 L1613.2 86 V103.3 H1593.6 Z" fill="#f1f1f1" stroke="#b8b8b8" stroke-width="1.1"/><g transform="translate(1603.6 90.4) rotate(41)"><rect x="-7" y="-2.7" width="14" height="5.4" fill="#f4f4f4" stroke="#b8b8b8" stroke-width="1"/><rect x="-5.2" y="-1" width="10.4" height="2" fill="#fff" stroke="#b8b8b8" stroke-width="0.8"/></g><g transform="translate(1612 82.6) rotate(41)"><rect x="-8.6" y="-3.4" width="17.2" height="6.8" fill="#fff"/><rect x="-7.4" y="-2" width="14.8" height="4.6" fill="#f4f4f4" stroke="#b8b8b8" stroke-width="1"/><rect x="-7.4" y="0.6" width="14.8" height="2" fill="#c4c4c4"/><rect x="-2.6" y="-8" width="5.6" height="6" fill="#fafafa" stroke="#b8b8b8" stroke-width="1"/></g><path d="M1600.95 131.40 L1603.20 133.80 L1605.45 131.40" fill="none" stroke="#c4c4c4" stroke-width="1.3" stroke-linecap="round" stroke-linejoin="round"/><rect x="1694.7" y="76.7" width="26.5" height="26.5" fill="#fff" stroke="#d83b01" stroke-width="1.3"/><g fill="none" stroke="#d83b01" stroke-width="1.1"><rect x="1697.7" y="79.6" width="8.4" height="8.3"/><rect x="1709.8" y="79.6" width="8.4" height="8.3"/><rect x="1697.7" y="91.9" width="8.4" height="8.3"/><rect x="1709.8" y="91.9" width="8.4" height="8.3"/></g><defs><linearGradient id="cg1" x1="0" y1="0" x2="0" y2="1"><stop offset="0" stop-color="#1e9cf0"/><stop offset="0.3" stop-color="#22a8d8"/><stop offset="0.6" stop-color="#4cc06a"/><stop offset="0.85" stop-color="#d8d020"/><stop offset="1" stop-color="#f0c818"/></linearGradient>
<linearGradient id="cg2" x1="0.6" y1="0" x2="0.3" y2="1"><stop offset="0" stop-color="#a855f0"/><stop offset="0.4" stop-color="#e8508c"/><stop offset="0.75" stop-color="#f8607a"/><stop offset="1" stop-color="#ffa438"/></linearGradient>
<linearGradient id="cg3" x1="0" y1="0" x2="0" y2="1"><stop offset="0" stop-color="#1440c8"/><stop offset="1" stop-color="#2a70e0"/></linearGradient>
<linearGradient id="cg4" x1="0" y1="0" x2="0" y2="1"><stop offset="0" stop-color="#f08030"/><stop offset="1" stop-color="#e03828"/></linearGradient></defs>
<path d="M1786.5 76.4 Q1789.6 76.2 1790.6 79 L1791.8 82.4 Q1792.4 84 1794 84.3 L1787 85 L1784.5 80 Z" fill="url(#cg3)"/>
<path d="M1776.4 95.6 L1784 95.2 L1782 103.2 Q1779 103.4 1778 100.6 L1777 97.4 Q1776.6 96 1775.2 95.6 Z" fill="url(#cg4)"/>
<path d="M1776.6 76.4 H1787 Q1789 76.4 1788.2 78.4 Q1786 83 1784.6 87.4 L1782.6 93.6 Q1782 95.4 1780 95.4 H1772.4 Q1769.2 95.4 1769.6 92.4 Q1770.4 86 1772.6 79.6 Q1773.8 76.4 1776.6 76.4 Z" fill="url(#cg1)"/>
<path d="M1791.6 103.2 H1781.2 Q1779.2 103.2 1780 101.2 Q1782.2 96.6 1783.6 92.2 L1785.6 86 Q1786.2 84.2 1788.2 84.2 H1795.8 Q1799 84.2 1798.6 87.2 Q1797.8 93.6 1795.6 100 Q1794.4 103.2 1791.6 103.2 Z" fill="url(#cg2)" stroke="#fff" stroke-width="0.9"/><path d="M1848.4 101.5 H1842 Q1839.6 101.5 1839.6 99.1 V81 Q1839.6 78.6 1842 78.6 H1853.2 L1857.4 82.8 V90.6" fill="none" stroke="#2f6fde" stroke-width="1.3" stroke-linejoin="round"/><path d="M1843.4 93 Q1847.4 91 1848.2 85.6 Q1848.4 83.4 1847.8 83.4 Q1847.2 83.6 1847.6 86 Q1848.6 89.6 1854.4 90.6 Q1855 90.2 1853.6 89.8 Q1849 89.4 1843.4 93 Z" fill="none" stroke="#2f6fde" stroke-width="0.9" stroke-linejoin="round"/><g fill="none" stroke="#2f6fde" stroke-width="1.5"><rect x="-5.2" y="-2.5" width="10.4" height="5" rx="2.5" transform="translate(1854.4 100.9) rotate(-42)"/><rect x="-5.2" y="-2.5" width="10.4" height="5" rx="2.5" transform="translate(1860.3 95.5) rotate(-42)"/></g></svg>
<div class="b" style="left:8.5px;top:175.3px;width:101px;height:25.3px;background:#fff;border:1px solid #e0e0e0;border-radius:4px;"></div>
<span class="t" style="left:14.29px;top:181.72px;font-size:13.3px;line-height:13.3px;color:#222;letter-spacing:-0.549px;">B354</span>
<svg class="b" style="left:89.25px;top:187.2px;" width="9.5" height="4.6" viewBox="0 0 9.5 4.6"><path d="M0 0 L4.75 4.6 L9.5 0" fill="none" stroke="#333" stroke-width="1.2" stroke-linecap="round" stroke-linejoin="round"/></svg>
<div class="b" style="left:119px;top:183.5px;width:2px;height:2px;background:#333;"></div>
<div class="b" style="left:119px;top:187.5px;width:2px;height:2px;background:#333;"></div>
<div class="b" style="left:119px;top:191.5px;width:2px;height:2px;background:#333;"></div>
<div class="b" style="left:130.5px;top:175.3px;width:85px;height:25.3px;background:#fff;border:1px solid #e0e0e0;border-radius:4px;"></div>
<svg class="b" style="left:137.5px;top:182px;" width="12" height="12" viewBox="0 0 12 12"><path d="M0.6 0.6 L11.4 11.4 M11.4 0.6 L0.6 11.4" stroke="#bdbdbd" stroke-width="1.1" fill="none"/></svg>
<svg class="b" style="left:159px;top:182px;" width="15" height="12" viewBox="0 0 15 12"><path d="M0.6 6.4 L5.4 11.2 L14.4 0.8" stroke="#bdbdbd" stroke-width="1.1" fill="none"/></svg>
<span class="t" style="left:184.39px;top:179.60px;font-size:16.5px;line-height:16.5px;color:#333;font-family:'Liberation Serif',serif;font-style:italic;letter-spacing:1.000px;">fx</span>
<svg class="b" style="left:204.25px;top:186.9px;" width="8.5" height="4.2" viewBox="0 0 8.5 4.2"><path d="M0 0 L4.25 4.2 L8.5 0" fill="none" stroke="#999" stroke-width="1.1" stroke-linecap="round" stroke-linejoin="round"/></svg>
<div class="b" style="left:220.5px;top:175.3px;width:1690.5px;height:25.3px;background:#fff;border:1px solid #e0e0e0;border-radius:4px;"></div>
<svg class="b" style="left:1897.5px;top:184.7px;" width="10" height="5" viewBox="0 0 10 5"><path d="M0 0 L5.0 5 L10 0" fill="none" stroke="#333" stroke-width="1.2" stroke-linecap="round" stroke-linejoin="round"/></svg>
<div class="b" style="left:26px;top:225px;width:1872px;height:742px;background:#fff;"></div>
<div class="b" style="left:1898px;top:204px;width:14px;height:764px;background:#f0f0f0;"></div>
<div class="b" style="left:154px;top:209px;width:1px;height:16px;background:#d0d0d0;"></div>
<div class="b" style="left:936px;top:209px;width:1px;height:16px;background:#d0d0d0;"></div>
<div class="b" style="left:1196px;top:209px;width:1px;height:16px;background:#d0d0d0;"></div>
<div class="b" style="left:1456px;top:209px;width:1px;height:16px;background:#d0d0d0;"></div>
<div class="b" style="left:1885px;top:209px;width:1px;height:16px;background:#d0d0d0;"></div>
<div class="b" style="left:25px;top:208px;width:1px;height:17px;background:#d0d0d0;"></div>
<div class="b" style="left:0px;top:224px;width:1898px;height:1px;background:#c8c8c8;"></div>
<svg class="b" style="left:13px;top:213px;" width="10" height="10" viewBox="0 0 10 10"><path d="M9.5 0.5 V9.5 H0.5 Z" fill="#d2d2d2"/></svg>
<span class="t" style="left:85.57px;top:209.52px;font-size:13.33px;line-height:13.33px;color:#3c3c3c;">A</span>
<span class="t" style="left:410.39px;top:209.52px;font-size:13.33px;line-height:13.33px;color:#3c3c3c;">B</span>
<span class="t" style="left:801.23px;top:209.52px;font-size:13.33px;line-height:13.33px;color:#3c3c3c;">C</span>
<span class="t" style="left:1060.91px;top:209.52px;font-size:13.33px;line-height:13.33px;color:#3c3c3c;">D</span>
<span class="t" style="left:1321.30px;top:209.52px;font-size:13.33px;line-height:13.33px;color:#3c3c3c;">E</span>
<span class="t" style="left:1665.47px;top:209.52px;font-size:13.33px;line-height:13.33px;color:#3c3c3c;">F</span>
<div class="b" style="left:26px;top:225px;width:1872px;height:64px;background:#000;"></div>
<div class="b" style="left:26px;top:289px;width:650px;height:339px;background:#fff2cc;"></div>
<div class="b" style="left:154px;top:289px;width:1px;height:339px;background:#000;"></div>
<div class="b" style="left:677px;top:289px;width:1208px;height:53px;background:#ffc000;"></div>
<div class="b" style="left:677px;top:343px;width:1208px;height:201px;background:#ffe699;"></div>
<div class="b" style="left:677px;top:545px;width:1208px;height:83px;background:#fff2cc;"></div>
<div class="b" style="left:1886px;top:289px;width:12px;height:339px;background:#f4b183;"></div>
<div class="b" style="left:677px;top:342px;width:1209px;height:1px;background:#000;"></div>
<div class="b" style="left:677px;top:544px;width:1209px;height:1px;background:#000;"></div>
<div class="b" style="left:1456px;top:343px;width:1px;height:285px;background:#000;"></div>
<div class="b" style="left:936px;top:545px;width:1px;height:83px;background:#000;"></div>
<div class="b" style="left:1196px;top:545px;width:1px;height:83px;background:#000;"></div>
<div class="b" style="left:1885px;top:289px;width:1px;height:339px;background:#000;"></div>
<div class="b" style="left:937px;top:629px;width:259px;height:17px;background:#ffff00;"></div>
<div class="b" style="left:26px;top:628px;width:1872px;height:1px;background:#000;"></div>
<div class="b" style="left:26px;top:646px;width:1872px;height:1px;background:#000;"></div>
<div class="b" style="left:26px;top:664px;width:1872px;height:1px;background:#000;"></div>
<div class="b" style="left:26px;top:682px;width:1872px;height:1px;background:#000;"></div>
<div class="b" style="left:26px;top:700px;width:1872px;height:1px;background:#000;"></div>
<div class="b" style="left:154px;top:628px;width:1px;height:72px;background:#000;"></div>
<div class="b" style="left:936px;top:628px;width:1px;height:72px;background:#000;"></div>
<div class="b" style="left:1196px;top:628px;width:1px;height:72px;background:#000;"></div>
<div class="b" style="left:1456px;top:628px;width:1px;height:72px;background:#000;"></div>
<div class="b" style="left:1885px;top:628px;width:1px;height:72px;background:#000;"></div>
<div class="b" style="left:26px;top:721px;width:1872px;height:1px;background:#e1e1e1;"></div>
<div class="b" style="left:26px;top:742px;width:1872px;height:1px;background:#e1e1e1;"></div>
<div class="b" style="left:26px;top:763px;width:1872px;height:1px;background:#e1e1e1;"></div>
<div class="b" style="left:26px;top:784px;width:1872px;height:1px;background:#e1e1e1;"></div>
<div class="b" style="left:26px;top:805px;width:1872px;height:1px;background:#e1e1e1;"></div>
<div class="b" style="left:26px;top:826px;width:1872px;height:1px;background:#e1e1e1;"></div>
<div class="b" style="left:26px;top:847px;width:1872px;height:1px;background:#e1e1e1;"></div>
<div class="b" style="left:26px;top:868px;width:1872px;height:1px;background:#e1e1e1;"></div>
<div class="b" style="left:26px;top:889px;width:1872px;height:1px;background:#e1e1e1;"></div>
<div class="b" style="left:26px;top:910px;width:1872px;height:1px;background:#e1e1e1;"></div>
<div class="b" style="left:26px;top:931px;width:1872px;height:1px;background:#e1e1e1;"></div>
<div class="b" style="left:26px;top:952px;width:1872px;height:1px;background:#e1e1e1;"></div>
<div class="b" style="left:154px;top:701px;width:1px;height:266px;background:#e1e1e1;"></div>
<div class="b" style="left:936px;top:701px;width:1px;height:266px;background:#e1e1e1;"></div>
<div class="b" style="left:1196px;top:701px;width:1px;height:266px;background:#e1e1e1;"></div>
<div class="b" style="left:1456px;top:701px;width:1px;height:266px;background:#e1e1e1;"></div>
<div class="b" style="left:1885px;top:701px;width:1px;height:266px;background:#e1e1e1;"></div>
<div class="b" style="left:676px;top:208px;width:1px;height:759px;background:#9b9b9b;"></div>
<div class="b" style="left:26px;top:966.5px;width:1872px;height:1px;background:#d0d0d0;"></div>
<div class="b" style="left:0px;top:225px;width:25px;height:742px;background:#f0f0f0;"></div>
<div class="b" style="left:25px;top:225px;width:1px;height:742px;background:#b4b4b4;"></div>
<span class="t" style="left:8.51px;top:275.02px;font-size:13.33px;line-height:13.33px;color:#333;">1</span>
<div class="b" style="left:0px;top:288px;width:25px;height:1px;background:#dedede;"></div>
<span class="t" style="left:8.73px;top:329.02px;font-size:13.33px;line-height:13.33px;color:#0000ff;">2</span>
<div class="b" style="left:0px;top:342px;width:25px;height:1px;background:#dedede;"></div>
<span class="t" style="left:8.62px;top:531.02px;font-size:13.33px;line-height:13.33px;color:#0000ff;">3</span>
<div class="b" style="left:0px;top:544px;width:25px;height:1px;background:#dedede;"></div>
<span class="t" style="left:8.81px;top:615.02px;font-size:13.33px;line-height:13.33px;color:#0000ff;">4</span>
<div class="b" style="left:0px;top:628px;width:25px;height:1px;background:#dedede;"></div>
<span class="t" style="left:1.63px;top:633.02px;font-size:13.33px;line-height:13.33px;color:#0000ff;letter-spacing:-0.352px;">261</span>
<div class="b" style="left:0px;top:646px;width:25px;height:1px;background:#dedede;"></div>
<span class="t" style="left:1.63px;top:651.02px;font-size:13.33px;line-height:13.33px;color:#0000ff;letter-spacing:-0.313px;">262</span>
<div class="b" style="left:0px;top:664px;width:25px;height:1px;background:#dedede;"></div>
<span class="t" style="left:1.63px;top:669.02px;font-size:13.33px;line-height:13.33px;color:#0000ff;letter-spacing:-0.344px;">263</span>
<div class="b" style="left:0px;top:682px;width:25px;height:1px;background:#dedede;"></div>
<span class="t" style="left:1.63px;top:687.02px;font-size:13.33px;line-height:13.33px;color:#0000ff;letter-spacing:-0.413px;">264</span>
<div class="b" style="left:0px;top:700px;width:25px;height:1px;background:#dedede;"></div>
<span class="t" style="left:1.67px;top:708.02px;font-size:13.33px;line-height:13.33px;color:#444;letter-spacing:-0.259px;">342</span>
<div class="b" style="left:0px;top:721px;width:25px;height:1px;background:#dedede;"></div>
<span class="t" style="left:1.67px;top:729.02px;font-size:13.33px;line-height:13.33px;color:#444;letter-spacing:-0.252px;">343</span>
<div class="b" style="left:0px;top:742px;width:25px;height:1px;background:#dedede;"></div>
<span class="t" style="left:1.67px;top:750.02px;font-size:13.33px;line-height:13.33px;color:#444;letter-spacing:-0.348px;">344</span>
<div class="b" style="left:0px;top:763px;width:25px;height:1px;background:#dedede;"></div>
<span class="t" style="left:1.67px;top:771.02px;font-size:13.33px;line-height:13.33px;color:#444;letter-spacing:-0.245px;">345</span>
<div class="b" style="left:0px;top:784px;width:25px;height:1px;background:#dedede;"></div>
<span class="t" style="left:1.67px;top:792.02px;font-size:13.33px;line-height:13.33px;color:#444;letter-spacing:-0.239px;">346</span>
<div class="b" style="left:0px;top:805px;width:25px;height:1px;background:#dedede;"></div>
<span class="t" style="left:1.67px;top:813.02px;font-size:13.33px;line-height:13.33px;color:#444;letter-spacing:-0.259px;">347</span>
<div class="b" style="left:0px;top:826px;width:25px;height:1px;background:#dedede;"></div>
<span class="t" style="left:1.67px;top:834.02px;font-size:13.33px;line-height:13.33px;color:#444;letter-spacing:-0.207px;">348</span>
<div class="b" style="left:0px;top:847px;width:25px;height:1px;background:#dedede;"></div>
<span class="t" style="left:1.67px;top:855.02px;font-size:13.33px;line-height:13.33px;color:#444;letter-spacing:-0.270px;">349</span>
<div class="b" style="left:0px;top:868px;width:25px;height:1px;background:#dedede;"></div>
<span class="t" style="left:1.67px;top:876.02px;font-size:13.33px;line-height:13.33px;color:#444;letter-spacing:-0.276px;">350</span>
<div class="b" style="left:0px;top:889px;width:25px;height:1px;background:#dedede;"></div>
<span class="t" style="left:1.67px;top:897.02px;font-size:13.33px;line-height:13.33px;color:#444;letter-spacing:-0.287px;">351</span>
<div class="b" style="left:0px;top:910px;width:25px;height:1px;background:#dedede;"></div>
<span class="t" style="left:1.67px;top:918.02px;font-size:13.33px;line-height:13.33px;color:#444;letter-spacing:-0.259px;">352</span>
<div class="b" style="left:0px;top:931px;width:25px;height:1px;background:#dedede;"></div>
<span class="t" style="left:1.67px;top:939.02px;font-size:13.33px;line-height:13.33px;color:#444;letter-spacing:-0.252px;">353</span>
<div class="b" style="left:0px;top:952px;width:25px;height:1px;background:#dedede;"></div>
<span class="t" style="left:1.67px;top:960.02px;font-size:13.33px;line-height:13.33px;color:#444;letter-spacing:-0.348px;">354</span>
<div class="b" style="left:0px;top:973px;width:25px;height:1px;background:#dedede;"></div>
<div class="b" style="left:0px;top:967px;width:1912px;height:40px;background:#f0f0f0;"></div>
<div class="b" style="left:137px;top:270px;width:17px;height:17px;background:#f3f3f3;border:1px solid #bdbdbd;border-right-color:#888;border-bottom-color:#888;"></div>
<svg class="b" style="left:139.5px;top:273.5px;" width="12" height="10" viewBox="0 0 12 10"><path d="M3.6 0.6 H11.4 V1.6 L8.6 4.4 V8.6 H6.4 V4.4 L3.6 1.6 Z" fill="#444"/><path d="M0.2 5.8 H4.6 L2.4 8.2 Z" fill="#444"/></svg>
<span class="t" style="left:211.10px;top:249.00px;font-size:16.5px;line-height:16.5px;color:#fff;font-family:'DejaVu Sans','Liberation Sans',sans-serif;font-weight:700;letter-spacing:-0.094px;-webkit-text-stroke-width:0.28px;">LISTA NACIONAL DE SERVIÇOS</span>
<span class="t" style="left:902.37px;top:249.00px;font-size:16.5px;line-height:16.5px;color:#fff;font-family:'DejaVu Sans','Liberation Sans',sans-serif;font-weight:700;letter-spacing:-0.117px;-webkit-text-stroke-width:0.28px;">DETERMINAÇÃO DA LOCALIDADE DE INCIDÊNCIA (LI) DE ACORDO COM A LC 116/03</span>
<span class="t" style="left:41.29px;top:433.80px;font-size:14.67px;line-height:14.67px;color:#000;font-family:'DejaVu Sans','Liberation Sans',sans-serif;font-weight:700;letter-spacing:0.489px;-webkit-text-stroke-width:0.28px;">CÓDIGO DE</span>
<span class="t" style="left:34.67px;top:451.90px;font-size:14.67px;line-height:14.67px;color:#000;font-family:'DejaVu Sans','Liberation Sans',sans-serif;font-weight:700;letter-spacing:0.635px;-webkit-text-stroke-width:0.28px;">TRIBUTAÇÃO</span>
<span class="t" style="left:44.59px;top:470.00px;font-size:14.67px;line-height:14.67px;color:#000;font-family:'DejaVu Sans','Liberation Sans',sans-serif;font-weight:700;letter-spacing:0.736px;-webkit-text-stroke-width:0.28px;">NACIONAL</span>
<span class="t" style="left:279.92px;top:434.90px;font-size:12.1px;line-height:12.1px;color:#000;font-family:'DejaVu Sans','Liberation Sans',sans-serif;font-weight:700;letter-spacing:0.470px;-webkit-text-stroke-width:0.22px;">DESCRIÇÃO DO DESDOBRO NACIONAL</span>
<span class="t" style="left:310.78px;top:452.90px;font-size:12.1px;line-height:12.1px;color:#000;font-family:'DejaVu Sans','Liberation Sans',sans-serif;font-weight:700;letter-spacing:0.477px;-webkit-text-stroke-width:0.22px;">DA LISTA DE SERVIÇO ANEXA</span>
<span class="t" style="left:361.93px;top:470.90px;font-size:12.1px;line-height:12.1px;color:#000;font-family:'DejaVu Sans','Liberation Sans',sans-serif;font-weight:700;letter-spacing:0.934px;-webkit-text-stroke-width:0.22px;">À LC 116/2003</span>
<span class="t" style="left:1003.10px;top:308.80px;font-size:14.67px;line-height:14.67px;color:#000;font-family:'DejaVu Sans','Liberation Sans',sans-serif;font-weight:700;letter-spacing:0.443px;-webkit-text-stroke-width:0.28px;">REGRAS DE INCIDÊNCIA DO ISSQN NO SISTEMA NACIONAL NFS-e</span>
<span class="t" style="left:749.17px;top:356.70px;font-size:12.1px;line-height:12.1px;color:#000;font-family:'DejaVu Sans','Liberation Sans',sans-serif;font-weight:700;letter-spacing:0.478px;-webkit-text-stroke-width:0.22px;">LI para os serviços indicados seguem as regras geral de EP e as exceções para LP e ET.</span>
<span class="t" style="left:833.04px;top:392.70px;font-size:12.1px;line-height:12.1px;color:#000;font-family:'DejaVu Sans','Liberation Sans',sans-serif;font-weight:700;letter-spacing:0.527px;-webkit-text-stroke-width:0.22px;"><span style="color:#ff0000">*</span> Com exceção do subitem 200101 da lista nacional de serviços,</span>
<span class="t" style="left:812.81px;top:410.70px;font-size:12.1px;line-height:12.1px;color:#000;font-family:'DejaVu Sans','Liberation Sans',sans-serif;font-weight:700;letter-spacing:0.516px;-webkit-text-stroke-width:0.22px;">todos os demais serviços podem ser prestados em &quot;Águas Marítimas&quot;</span>
<span class="t" style="left:867.91px;top:428.70px;font-size:12.1px;line-height:12.1px;color:#000;font-family:'DejaVu Sans','Liberation Sans',sans-serif;font-weight:700;letter-spacing:0.602px;-webkit-text-stroke-width:0.22px;">(cLocPrestacao = 0000000). Neste caso o LI será EDP.</span>
<span class="t" style="left:897.06px;top:464.70px;font-size:12.1px;line-height:12.1px;color:#000;font-family:'DejaVu Sans','Liberation Sans',sans-serif;font-weight:700;letter-spacing:0.578px;-webkit-text-stroke-width:0.22px;"><span style="color:#ff0000">**</span> Caso o emitente informe o subitem 200101,</span>
<span class="t" style="left:776.37px;top:482.70px;font-size:12.1px;line-height:12.1px;color:#000;font-family:'DejaVu Sans','Liberation Sans',sans-serif;font-weight:700;letter-spacing:0.439px;-webkit-text-stroke-width:0.22px;">o LP não poderá ser &quot;Águas Marítimas&quot; e o LI será o município informado em LP.</span>
<span class="t" style="left:964.84px;top:518.70px;font-size:12.1px;line-height:12.1px;color:#000;font-family:'DejaVu Sans','Liberation Sans',sans-serif;font-weight:700;letter-spacing:0.748px;-webkit-text-stroke-width:0.22px;">(Art 3º, § 3º da LC 116/03).</span>
<span class="t" style="left:733.51px;top:563.60px;font-size:12.1px;line-height:12.1px;color:#000;font-family:'DejaVu Sans','Liberation Sans',sans-serif;font-weight:700;letter-spacing:0.777px;-webkit-text-stroke-width:0.22px;"><span style="color:#ff0000">*</span> Estabelecimento /</span>
<span class="t" style="left:724.72px;top:581.60px;font-size:12.1px;line-height:12.1px;color:#000;font-family:'DejaVu Sans','Liberation Sans',sans-serif;font-weight:700;letter-spacing:0.370px;-webkit-text-stroke-width:0.22px;">Domicílio do Prestador</span>
<span class="t" style="left:791.48px;top:599.40px;font-size:12.1px;line-height:12.1px;color:#000;font-family:'DejaVu Sans','Liberation Sans',sans-serif;font-weight:700;letter-spacing:1.000px;-webkit-text-stroke-width:0.22px;">(EP)</span>
<span class="t" style="left:996.93px;top:572.60px;font-size:12.1px;line-height:12.1px;color:#000;font-family:'DejaVu Sans','Liberation Sans',sans-serif;font-weight:700;letter-spacing:0.585px;-webkit-text-stroke-width:0.22px;">Local da Prestação</span>
<span class="t" style="left:1051.52px;top:590.40px;font-size:12.1px;line-height:12.1px;color:#000;font-family:'DejaVu Sans','Liberation Sans',sans-serif;font-weight:700;letter-spacing:1.000px;-webkit-text-stroke-width:0.22px;">(LP)</span>
<span class="t" style="left:1262.72px;top:563.60px;font-size:12.1px;line-height:12.1px;color:#000;font-family:'DejaVu Sans','Liberation Sans',sans-serif;font-weight:700;letter-spacing:0.796px;-webkit-text-stroke-width:0.22px;">Estabelecimeto /</span>
<span class="t" style="left:1247.72px;top:581.60px;font-size:12.1px;line-height:12.1px;color:#000;font-family:'DejaVu Sans','Liberation Sans',sans-serif;font-weight:700;letter-spacing:0.483px;-webkit-text-stroke-width:0.22px;">Domicílio do Tomador</span>
<span class="t" style="left:1310.72px;top:599.40px;font-size:12.1px;line-height:12.1px;color:#000;font-family:'DejaVu Sans','Liberation Sans',sans-serif;font-weight:700;letter-spacing:1.000px;-webkit-text-stroke-width:0.22px;">(ET)</span>
<span class="t" style="left:1621.93px;top:348.90px;font-size:12.1px;line-height:12.1px;color:#000;font-family:'DejaVu Sans','Liberation Sans',sans-serif;font-weight:700;letter-spacing:0.879px;-webkit-text-stroke-width:0.22px;">IMPORTAÇÃO</span>
<span class="t" style="left:1610.75px;top:402.50px;font-size:12.1px;line-height:12.1px;color:#000;font-family:'DejaVu Sans','Liberation Sans',sans-serif;font-weight:700;letter-spacing:0.641px;-webkit-text-stroke-width:0.22px;">Emitente  = T | I</span>
<span class="t" style="left:1616.93px;top:438.50px;font-size:12.1px;line-height:12.1px;color:#000;font-family:'DejaVu Sans','Liberation Sans',sans-serif;font-weight:700;letter-spacing:0.479px;-webkit-text-stroke-width:0.22px;">País Exterior P</span>
<span class="t" style="left:1654.75px;top:456.50px;font-size:12.1px;line-height:12.1px;color:#000;font-family:'DejaVu Sans','Liberation Sans',sans-serif;font-weight:700;letter-spacing:1.000px;-webkit-text-stroke-width:0.22px;">e/ou</span>
<span class="t" style="left:1612.93px;top:474.50px;font-size:12.1px;line-height:12.1px;color:#000;font-family:'DejaVu Sans','Liberation Sans',sans-serif;font-weight:700;letter-spacing:0.467px;-webkit-text-stroke-width:0.22px;">País Exterior LP</span>
<span class="t" style="left:1459.93px;top:510.50px;font-size:12.1px;line-height:12.1px;color:#000;font-family:'DejaVu Sans','Liberation Sans',sans-serif;font-weight:700;letter-spacing:0.502px;-webkit-text-stroke-width:0.22px;">A incidência do ISSQN em casos de Importação de serviço</span>
<span class="t" style="left:1490.96px;top:528.50px;font-size:12.1px;line-height:12.1px;color:#000;font-family:'DejaVu Sans','Liberation Sans',sans-serif;font-weight:700;letter-spacing:0.532px;-webkit-text-stroke-width:0.22px;">prevalece sobre as regras do Art 3º da LC 116/03</span>
<span class="t" style="left:1603.92px;top:554.60px;font-size:12.1px;line-height:12.1px;color:#000;font-family:'DejaVu Sans','Liberation Sans',sans-serif;font-weight:700;letter-spacing:0.708px;-webkit-text-stroke-width:0.22px;">Estabelecimento /</span>
<span class="t" style="left:1556.72px;top:572.60px;font-size:12.1px;line-height:12.1px;color:#000;font-family:'DejaVu Sans','Liberation Sans',sans-serif;font-weight:700;letter-spacing:0.478px;-webkit-text-stroke-width:0.22px;">Domicílio do Emitente (EDEmit)</span>
<span class="t" style="left:1608.78px;top:608.70px;font-size:12.1px;line-height:12.1px;color:#000;font-family:'DejaVu Sans','Liberation Sans',sans-serif;font-weight:700;letter-spacing:0.866px;-webkit-text-stroke-width:0.22px;">LI = EDEmit (T|I)</span>
<div class="b" style="left:1886px;top:289px;width:12px;height:339px;overflow:hidden;font-family:'DejaVu Sans',sans-serif;font-weight:700;font-size:12.1px;line-height:14px;white-space:pre"><span class="t" style="left:9.6px;top:36.5px">(</span><span class="t" style="left:5.2px;top:216.6px">in</span><span class="t" style="left:5.2px;top:288.6px">E</span></div>
<span class="t" style="left:66.26px;top:632.08px;font-size:12.1px;line-height:12.1px;color:#000;font-family:'DejaVu Sans','Liberation Sans',sans-serif;letter-spacing:0.343px;">160101</span>
<span class="t" style="left:156.11px;top:632.88px;font-size:12.1px;line-height:12.1px;color:#000;font-family:'DejaVu Sans','Liberation Sans',sans-serif;letter-spacing:0.545px;">Serviços de transporte coletivo municipal rodoviário de passageiros.</span>
<span class="t" style="left:803.82px;top:632.38px;font-size:12.1px;line-height:12.1px;color:#000;font-family:'DejaVu Sans','Liberation Sans',sans-serif;">-</span>
<span class="t" style="left:1062.01px;top:632.98px;font-size:12.1px;line-height:12.1px;color:#000;font-family:'DejaVu Sans','Liberation Sans',sans-serif;">X</span>
<span class="t" style="left:1323.82px;top:632.38px;font-size:12.1px;line-height:12.1px;color:#000;font-family:'DejaVu Sans','Liberation Sans',sans-serif;">-</span>
<span class="t" style="left:1666.01px;top:632.98px;font-size:12.1px;line-height:12.1px;color:#000;font-family:'DejaVu Sans','Liberation Sans',sans-serif;">X</span>
<svg class="b" style="left:26px;top:629px;" width="7" height="7" viewBox="0 0 7 7"><path d="M0 0 H6.5 L0 6.5 Z" fill="#107c41"/></svg>
<span class="t" style="left:66.26px;top:650.08px;font-size:12.1px;line-height:12.1px;color:#000;font-family:'DejaVu Sans','Liberation Sans',sans-serif;letter-spacing:0.344px;">160102</span>
<span class="t" style="left:156.11px;top:650.88px;font-size:12.1px;line-height:12.1px;color:#000;font-family:'DejaVu Sans','Liberation Sans',sans-serif;letter-spacing:0.539px;">Serviços de transporte coletivo municipal metroviário de passageiros.</span>
<span class="t" style="left:803.82px;top:650.38px;font-size:12.1px;line-height:12.1px;color:#000;font-family:'DejaVu Sans','Liberation Sans',sans-serif;">-</span>
<span class="t" style="left:1062.01px;top:650.98px;font-size:12.1px;line-height:12.1px;color:#000;font-family:'DejaVu Sans','Liberation Sans',sans-serif;">X</span>
<span class="t" style="left:1323.82px;top:650.38px;font-size:12.1px;line-height:12.1px;color:#000;font-family:'DejaVu Sans','Liberation Sans',sans-serif;">-</span>
<span class="t" style="left:1666.01px;top:650.98px;font-size:12.1px;line-height:12.1px;color:#000;font-family:'DejaVu Sans','Liberation Sans',sans-serif;">X</span>
<svg class="b" style="left:26px;top:647px;" width="7" height="7" viewBox="0 0 7 7"><path d="M0 0 H6.5 L0 6.5 Z" fill="#107c41"/></svg>
<span class="t" style="left:66.26px;top:668.08px;font-size:12.1px;line-height:12.1px;color:#000;font-family:'DejaVu Sans','Liberation Sans',sans-serif;letter-spacing:0.337px;">160103</span>
<span class="t" style="left:156.11px;top:668.88px;font-size:12.1px;line-height:12.1px;color:#000;font-family:'DejaVu Sans','Liberation Sans',sans-serif;letter-spacing:0.550px;">Serviços de transporte coletivo municipal ferroviário de passageiros.</span>
<span class="t" style="left:803.82px;top:668.38px;font-size:12.1px;line-height:12.1px;color:#000;font-family:'DejaVu Sans','Liberation Sans',sans-serif;">-</span>
<span class="t" style="left:1062.01px;top:668.98px;font-size:12.1px;line-height:12.1px;color:#000;font-family:'DejaVu Sans','Liberation Sans',sans-serif;">X</span>
<span class="t" style="left:1323.82px;top:668.38px;font-size:12.1px;line-height:12.1px;color:#000;font-family:'DejaVu Sans','Liberation Sans',sans-serif;">-</span>
<span class="t" style="left:1666.01px;top:668.98px;font-size:12.1px;line-height:12.1px;color:#000;font-family:'DejaVu Sans','Liberation Sans',sans-serif;">X</span>
<svg class="b" style="left:26px;top:665px;" width="7" height="7" viewBox="0 0 7 7"><path d="M0 0 H6.5 L0 6.5 Z" fill="#107c41"/></svg>
<span class="t" style="left:66.26px;top:686.08px;font-size:12.1px;line-height:12.1px;color:#000;font-family:'DejaVu Sans','Liberation Sans',sans-serif;letter-spacing:0.176px;">160104</span>
<span class="t" style="left:156.11px;top:686.88px;font-size:12.1px;line-height:12.1px;color:#000;font-family:'DejaVu Sans','Liberation Sans',sans-serif;letter-spacing:0.545px;">Serviços de transporte coletivo municipal aquaviário de passageiros.</span>
<span class="t" style="left:803.82px;top:686.38px;font-size:12.1px;line-height:12.1px;color:#000;font-family:'DejaVu Sans','Liberation Sans',sans-serif;">-</span>
<span class="t" style="left:1062.01px;top:686.98px;font-size:12.1px;line-height:12.1px;color:#000;font-family:'DejaVu Sans','Liberation Sans',sans-serif;">X</span>
<span class="t" style="left:1323.82px;top:686.38px;font-size:12.1px;line-height:12.1px;color:#000;font-family:'DejaVu Sans','Liberation Sans',sans-serif;">-</span>
<span class="t" style="left:1666.01px;top:686.98px;font-size:12.1px;line-height:12.1px;color:#000;font-family:'DejaVu Sans','Liberation Sans',sans-serif;">X</span>
<svg class="b" style="left:26px;top:683px;" width="7" height="7" viewBox="0 0 7 7"><path d="M0 0 H6.5 L0 6.5 Z" fill="#107c41"/></svg>
<div class="b" style="left:675px;top:286.6px;width:783px;height:505.9px;border:3.2px solid #ff0000;border-radius:5.5px;"></div>
<svg class="b" style="left:1020px;top:705px;" width="30" height="82" viewBox="0 0 30 82"><path d="M5.6 76 L18.4 22" stroke="#ff0000" stroke-width="3.2" stroke-linecap="butt"/><path d="M22.7 5 L13 21.2 L24.2 23.8 Z" fill="#ff0000"/></svg>
<div class="b" style="left:1900px;top:207px;width:20px;height:761px;background:#f7f7f7;border-radius:8px;"></div>
<svg class="b" style="left:1905px;top:213px;" width="7" height="6" viewBox="0 0 7 6"><path d="M0 6 L4.5 0 L9 6 Z" fill="#737373"/></svg>
<div class="b" style="left:1905px;top:225px;width:12px;height:719.5px;background:#737373;border-radius:5px;"></div>
<svg class="b" style="left:1905px;top:957.5px;" width="7" height="6" viewBox="0 0 7 6"><path d="M0 0 L4.5 6 L9 0 Z" fill="#737373"/></svg>
<svg class="b" style="left:27px;top:977px;" width="8" height="12" viewBox="0 0 8 12"><path d="M6.5 1 L1.5 6 L6.5 11" fill="none" stroke="#a6a6a6" stroke-width="1.2"/></svg>
<svg class="b" style="left:60px;top:977px;" width="8" height="12" viewBox="0 0 8 12"><path d="M1.5 1 L6.5 6 L1.5 11" fill="none" stroke="#a6a6a6" stroke-width="1.2"/></svg>
<div class="b" style="left:115.7px;top:967.5px;width:174.5px;height:27.6px;background:#fff;border-radius:0 0 5px 5px;box-shadow:0 1px 2px rgba(0,0,0,.22);"></div>
<span class="t" style="left:123.90px;top:973.90px;font-size:13.2px;line-height:13.2px;color:#222;font-weight:700;letter-spacing:0.428px;">MUN.INCID_INFO.SERV.</span>
<div class="b" style="left:124px;top:990.2px;width:158px;height:1.9px;background:#107c41;"></div>
<span class="t" style="left:312.78px;top:977.02px;font-size:13px;line-height:13px;color:#333;letter-spacing:-0.272px;">EXPORTACAO_EMISSÃO_NFS-e</span>
<span class="t" style="left:538.98px;top:977.02px;font-size:13px;line-height:13px;color:#333;letter-spacing:-0.667px;">RN_RECEPCAO_DPS</span>
<span class="t" style="left:694.34px;top:977.02px;font-size:13px;line-height:13px;color:#333;letter-spacing:-0.374px;">LEIAUTE DPS_NFS-e</span>
<span class="t" style="left:852.76px;top:977.02px;font-size:13px;line-height:13px;color:#333;letter-spacing:-0.257px;">RN DPS_NFS-e</span>
<div class="b" style="left:294px;top:974px;width:1px;height:18px;background:#d0d0d0;"></div>
<div class="b" style="left:524px;top:974px;width:1px;height:18px;background:#d0d0d0;"></div>
<div class="b" style="left:678px;top:974px;width:1px;height:18px;background:#d0d0d0;"></div>
<div class="b" style="left:837px;top:974px;width:1px;height:18px;background:#d0d0d0;"></div>
<div class="b" style="left:958px;top:974px;width:1px;height:18px;background:#d0d0d0;"></div>
<svg class="b" style="left:1001px;top:977px;" width="11" height="11" viewBox="0 0 11 11"><path d="M5.5 0.2 V10.8 M0.2 5.6 H10.8" stroke="#333" stroke-width="1.2"/></svg>
<div class="b" style="left:1154px;top:978.7px;width:2px;height:2px;background:#333;"></div>
<div class="b" style="left:1154px;top:982.6px;width:2px;height:2px;background:#333;"></div>
<div class="b" style="left:1154px;top:986.6px;width:2px;height:2px;background:#333;"></div>
<div class="b" style="left:1171px;top:973.7px;width:728px;height:17.5px;background:#f7f7f7;border-radius:9px;"></div>
<svg class="b" style="left:1175.6px;top:978px;" width="7" height="9" viewBox="0 0 7 9"><path d="M7 0 L0 4.5 L7 9 Z" fill="#737373"/></svg>
<div class="b" style="left:1187.7px;top:978px;width:487.3px;height:9.2px;background:#737373;border-radius:5px;"></div>
<svg class="b" style="left:1887px;top:978px;" width="7.3" height="9" viewBox="0 0 7.3 9"><path d="M0 0 L7.3 4.5 L0 9 Z" fill="#737373"/></svg>
<div class="b" style="left:0px;top:999px;width:1912px;height:8px;background:#f6f6f6;"></div>
<span class="t" style="left:11.20px;top:1003.69px;font-size:12.4px;line-height:12.4px;color:#333;letter-spacing:0.070px;">Pronto</span>
<span class="t" style="left:60.66px;top:1003.69px;font-size:12.4px;line-height:12.4px;color:#333;letter-spacing:-0.324px;">4 de 340 registros localizados</span>
<span class="t" style="left:252.94px;top:1003.69px;font-size:12.4px;line-height:12.4px;color:#333;letter-spacing:-0.305px;">Acessibilidade: Investigar</span>
<svg class="b" style="left:236px;top:1003px;" width="12" height="6" viewBox="0 0 12 6"><circle cx="6" cy="2.2" r="1.6" fill="none" stroke="#333" stroke-width="1"/><path d="M1 5.5 H11" stroke="#333" stroke-width="1"/></svg>
<div class="b" style="left:1620px;top:1000px;width:40px;height:8px;background:#e0e0e0;"></div>
<svg class="b" style="left:1633px;top:1003.5px;" width="14" height="8" viewBox="0 0 14 8"><rect x="0.6" y="0.6" width="11.8" height="10" fill="none" stroke="#333" stroke-width="1.1"/><path d="M4.6 0.6 V8 M8.6 0.6 V8" stroke="#333" stroke-width="1"/></svg>
<svg class="b" style="left:1673px;top:1003.5px;" width="15" height="8" viewBox="0 0 15 8"><rect x="0.6" y="0.6" width="13" height="10" fill="none" stroke="#333" stroke-width="1.1"/><rect x="3.6" y="3" width="7" height="8" fill="none" stroke="#333" stroke-width="1"/></svg>
<svg class="b" style="left:1713.5px;top:1003.5px;" width="14" height="8" viewBox="0 0 14 8"><rect x="0.6" y="0.6" width="12.4" height="10" fill="none" stroke="#333" stroke-width="1.1"/><path d="M6.8 0.6 V8" stroke="#333" stroke-width="1"/></svg>
<svg class="b" style="left:1478px;top:1004.5px;" width="14" height="6" viewBox="0 0 14 6"><rect x="0.6" y="0.6" width="12.8" height="8" fill="none" stroke="#333" stroke-width="1.1"/></svg>
<div class="b" style="left:1806px;top:1005.5px;width:5px;height:2px;background:#444;"></div>
<span class="t" style="left:1886.50px;top:1004.69px;font-size:12.4px;line-height:12.4px;color:#333;">100%</span>
</body></html>
